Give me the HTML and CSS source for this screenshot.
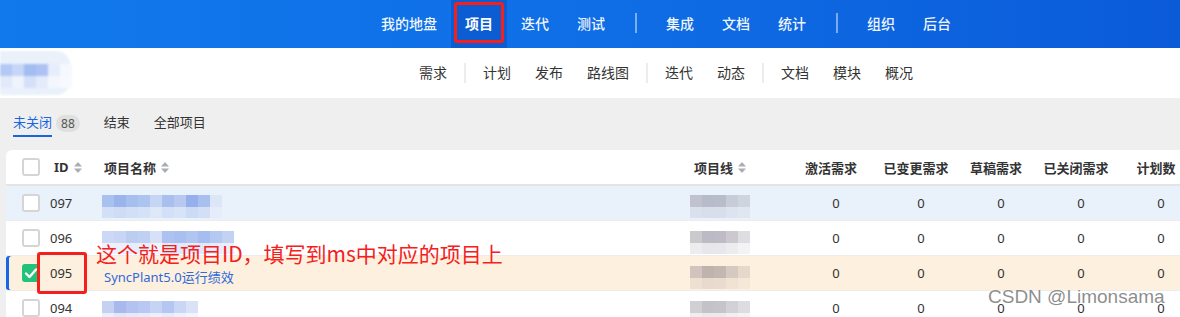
FILE: index.html
```html
<!DOCTYPE html>
<html lang="zh-CN">
<head>
<meta charset="utf-8">
<title>项目</title>
<link rel="stylesheet" href="styles.css">
</head>
<body>
<div class="page">
  <header class="topbar">
    <nav class="mainnav">
      <a class="nav-item">我的地盘</a>
      <a class="nav-item active">项目<span class="mark mark-nav"></span></a>
      <a class="nav-item">迭代</a>
      <a class="nav-item">测试</a>
      <span class="nav-sep"></span>
      <a class="nav-item">集成</a>
      <a class="nav-item">文档</a>
      <a class="nav-item">统计</a>
      <span class="nav-sep"></span>
      <a class="nav-item">组织</a>
      <a class="nav-item">后台</a>
    </nav>
  </header>

  <div class="subbar">
    <div class="logo-blur">
      <div class="logo-row logo-row-a"></div>
      <div class="logo-row logo-row-b"></div>
    </div>
    <nav class="subnav">
      <a class="sub-item">需求</a>
      <span class="sub-sep"></span>
      <a class="sub-item">计划</a>
      <a class="sub-item">发布</a>
      <a class="sub-item">路线图</a>
      <span class="sub-sep"></span>
      <a class="sub-item">迭代</a>
      <a class="sub-item">动态</a>
      <span class="sub-sep"></span>
      <a class="sub-item">文档</a>
      <a class="sub-item">模块</a>
      <a class="sub-item">概况</a>
    </nav>
  </div>

  <main class="content">
    <div class="tabs">
      <div class="tab active"><span class="tab-label">未关闭</span><span class="badge">88</span></div>
      <div class="tab"><span class="tab-label">结束</span></div>
      <div class="tab"><span class="tab-label">全部项目</span></div>
    </div>

    <div class="card">
      <div class="row head">
        <div class="c-check"><span class="checkbox"></span></div>
        <div class="c-id"><span class="th">ID<svg class="sort" viewBox="0 0 8 11" width="8" height="11"><polygon points="0,4.5 4,0 8,4.5"/><polygon points="0,6.5 8,6.5 4,11"/></svg></span></div>
        <div class="c-name"><span class="th">项目名称<svg class="sort" viewBox="0 0 8 11" width="8" height="11"><polygon points="0,4.5 4,0 8,4.5"/><polygon points="0,6.5 8,6.5 4,11"/></svg></span></div>
        <div class="c-line"><span class="th">项目线<svg class="sort" viewBox="0 0 8 11" width="8" height="11"><polygon points="0,4.5 4,0 8,4.5"/><polygon points="0,6.5 8,6.5 4,11"/></svg></span></div>
        <div class="c-num">激活需求</div>
        <div class="c-num">已变更需求</div>
        <div class="c-num">草稿需求</div>
        <div class="c-num">已关闭需求</div>
        <div class="c-num">计划数</div>
      </div>

      <div class="row hover">
        <div class="c-check"><span class="checkbox"></span></div>
        <div class="c-id">097</div>
        <div class="c-name"><span class="mosaic m-name-1"></span></div>
        <div class="c-line"><span class="mosaic m-line-1"></span></div>
        <div class="c-num">0</div>
        <div class="c-num">0</div>
        <div class="c-num">0</div>
        <div class="c-num">0</div>
        <div class="c-num">0</div>
      </div>

      <div class="row">
        <div class="c-check"><span class="checkbox"></span></div>
        <div class="c-id">096</div>
        <div class="c-name"><span class="mosaic m-name-2"></span></div>
        <div class="c-line"><span class="mosaic m-line-2"></span></div>
        <div class="c-num">0</div>
        <div class="c-num">0</div>
        <div class="c-num">0</div>
        <div class="c-num">0</div>
        <div class="c-num">0</div>
      </div>

      <div class="row selected">
        <div class="c-check"><span class="checkbox checked"><svg viewBox="0 0 18 18" width="18" height="18"><polyline points="4,9.5 7.5,13 14,5.5"/></svg></span></div>
        <div class="c-id">095<span class="mark mark-id"></span></div>
        <div class="c-name"><a class="proj-link">SyncPlant5.0运行绩效</a><span class="note">这个就是项目ID，填写到ms中对应的项目上</span></div>
        <div class="c-line"><span class="mosaic m-line-3"></span></div>
        <div class="c-num">0</div>
        <div class="c-num">0</div>
        <div class="c-num">0</div>
        <div class="c-num">0</div>
        <div class="c-num">0</div>
      </div>

      <div class="row">
        <div class="c-check"><span class="checkbox"></span></div>
        <div class="c-id">094</div>
        <div class="c-name"><span class="mosaic m-name-4"></span></div>
        <div class="c-line"><span class="mosaic m-line-4"></span></div>
        <div class="c-num">0</div>
        <div class="c-num">0</div>
        <div class="c-num">0</div>
        <div class="c-num">0</div>
        <div class="c-num">0</div>
      </div>
    </div>
  </main>

  <div class="watermark">CSDN @Limonsama</div>
</div>
</body>
</html>
```

FILE: styles.css
```css
html, body {
  margin: 0;
  padding: 0;
}
body {
  width: 1180px;
  height: 317px;
  overflow: hidden;
  background: #efefef;
  font-family: "Noto Sans", "Noto Sans CJK SC", sans-serif;
  color: #333;
}
.page {
  position: relative;
  width: 1180px;
  height: 317px;
  overflow: hidden;
}

/* ---------- top bar ---------- */
.topbar {
  height: 48px;
  background: linear-gradient(90deg, #1179ec 0%, #0f6ee6 50%, #0b5bd9 100%);
}
.mainnav {
  display: flex;
  height: 48px;
  padding-left: 367px;
}
.nav-item {
  position: relative;
  display: flex;
  align-items: center;
  box-sizing: border-box;
  height: 48px;
  padding: 0 14px 3px;
  font-family: "Noto Sans CJK SC", sans-serif;
  font-size: 14px;
  line-height: 1;
  font-weight: 500;
  color: rgba(255, 255, 255, 0.95);
}
.nav-item.active {
  background: #0c5dd2;
  color: #fff;
  font-weight: 700;
}
.nav-sep {
  width: 2px;
  height: 20px;
  margin: 13px 15px 0 16px;
  background: rgba(255, 255, 255, 0.45);
}

/* red annotation boxes */
.mark {
  position: absolute;
  box-sizing: border-box;
  border: 3px solid #f5201c;
  border-radius: 3px;
}
.mark-nav {
  left: 3px;
  right: 3px;
  top: 2px;
  height: 41px;
}
.mark-id {
  left: -13px;
  top: -4px;
  width: 50px;
  height: 42px;
}

/* ---------- sub bar ---------- */
.subbar {
  display: flex;
  align-items: center;
  height: 50px;
  background: #fff;
}
.logo-blur {
  width: 70px;
  height: 44px;
  padding-top: 13px;
  box-sizing: border-box;
  background: #eaf1fb;
  border-radius: 0 14px 14px 0;
  filter: blur(0.8px);
}
.logo-row {
  height: 12px;
  width: 72px;
}
.logo-row-a {
  background: linear-gradient(90deg, #b3c9f3 0 12px, #c6d6f6 12px 24px, #a2bdf1 24px 36px, #adc2f2 36px 48px, #e6eefb 48px 60px, #f5f8fe 60px 72px);
}
.logo-row-b {
  background: linear-gradient(90deg, #e2eaf9 0 12px, #eef3fc 12px 24px, #d5e0f8 24px 36px, #e4ebfa 36px 48px, #f3f7fd 48px 60px, #f7f9fe 60px 72px);
}
.subnav {
  display: flex;
  align-items: center;
  margin-left: 337px;
  height: 50px;
}
.sub-item {
  padding: 0 12px;
  font-family: "Noto Sans CJK SC", sans-serif;
  font-size: 14px;
  line-height: 1;
  color: #333;
  padding-bottom: 2px;
}
.sub-sep {
  width: 2px;
  height: 20px;
  margin: 0 5px;
  background: #ececec;
}

/* ---------- tabs ---------- */
.tabs {
  display: flex;
  align-items: flex-start;
  gap: 24px;
  padding: 12px 13px 0;
}
.tab {
  display: flex;
  align-items: flex-start;
}
.tab-label {
  display: block;
  font-family: "Noto Sans CJK SC", sans-serif;
  font-size: 13px;
  line-height: 24px;
  padding-bottom: 1px;
  border-bottom: 2px solid transparent;
  color: #333;
}
.tab.active .tab-label {
  color: #1766e0;
  border-bottom-color: #1766e0;
}
.badge {
  margin: 5px 0 0 4px;
  height: 17px;
  padding: 0 5px;
  border-radius: 9px;
  background: #e0e0e0;
  color: #555;
  font-size: 12px;
  line-height: 17px;
}

/* ---------- table card ---------- */
.card {
  margin: 13px 0 0 6px;
  width: 1195px;
  background: #fff;
  border-radius: 6px 0 0 0;
}
.row {
  position: relative;
  display: grid;
  grid-template-columns: 44px 50px 586px 105px 90px 80px 80px 80px 80px;
  align-items: center;
  box-sizing: border-box;
  height: 35px;
  border-bottom: 1px solid #ececec;
  font-size: 13px;
  color: #333;
}
.row.head {
  height: 36px;
  border-bottom: 2px solid #e4e4e4;
  font-weight: 700;
  border-radius: 6px 0 0 0;
}
.row.hover {
  background: #e9f1fb;
}
.row.selected {
  background: #fdf0de;
  box-shadow: inset 3px 0 0 #1565e6;
  border-radius: 3px 0 0 3px;
}
.c-check {
  display: flex;
  align-items: center;
  padding-left: 16px;
}
.c-id {
  position: relative;
  align-self: stretch;
  display: flex;
  align-items: center;
  padding-left: 0;
}
.head .c-id {
  padding-left: 4px;
}
.c-name {
  position: relative;
  padding-left: 4px;
  align-self: stretch;
  display: flex;
  align-items: center;
}
.c-line {
  padding-left: 4px;
  align-self: stretch;
  display: flex;
  align-items: center;
}
.head .c-line {
  padding-left: 8px;
}
.c-num {
  text-align: center;
}
.head .c-num {
  padding-right: 10px;
}
.th {
  display: inline-flex;
  align-items: center;
  gap: 5px;
  font-family: "Noto Sans CJK SC", sans-serif;
}
.c-id .th {
  font-family: "Noto Sans", "Noto Sans CJK SC", sans-serif;
}
.sort {
  fill: #a9adb5;
}
.head .c-num {
  font-family: "Noto Sans CJK SC", sans-serif;
}

.checkbox {
  display: block;
  box-sizing: border-box;
  width: 18px;
  height: 18px;
  border: 2px solid #d5d5d5;
  border-radius: 3px;
  background: #fff;
}
.checkbox.checked {
  position: relative;
  border: none;
  background: #22c27a;
}
.checkbox.checked svg {
  display: block;
  fill: none;
  stroke: #fff;
  stroke-width: 2.4;
  stroke-linecap: round;
  stroke-linejoin: round;
}

.proj-link {
  padding-top: 6px;
  font-size: 13px;
  color: #2f6ad8;
}
.note {
  position: absolute;
  left: -4px;
  top: -14px;
  white-space: nowrap;
  font-family: "Noto Sans CJK SC", sans-serif;
  font-size: 21px;
  line-height: 22px;
  color: #f5201c;
}

/* pixelated placeholders */
.mosaic {
  display: block;
  align-self: flex-start;
  margin-top: 9px;
  height: 12px;
  position: relative;
}
.mosaic::after {
  content: "";
  position: absolute;
  left: 0;
  right: 0;
  top: 12px;
  height: 11px;
  opacity: 0.35;
  background: inherit;
}
.m-name-1 {
  width: 120px;
  margin-left: -2px;
  background: linear-gradient(90deg, #a9c1ef 0 12px, #9bb4ec 12px 24px, #a6bfef 24px 36px, #aec4f0 36px 48px, #c6d5f3 48px 60px, #a9c0ef 60px 72px, #b7c9f1 72px 84px, #95b0ec 84px 96px, #a8bff0 96px 108px, #dde6f7 108px 120px);
}
.m-name-2 {
  width: 132px;
  margin-left: -2px;
  margin-top: 10px;
  background: linear-gradient(90deg, #ccd8f5 0 12px, #c8d5f4 12px 24px, #bccdf2 24px 36px, #bfd0f3 36px 48px, #d6e0f6 48px 60px, #adc2f0 60px 72px, #a8bff0 72px 84px, #b1c5f1 84px 96px, #a5bdef 96px 108px, #b5c8f1 108px 120px, #c1d2f3 120px 132px);
}
.m-name-4 {
  width: 96px;
  margin-left: -2px;
  margin-top: 10px;
  background: linear-gradient(90deg, #c6d0f2 0 12px, #a9b9ee 12px 24px, #b3c2f0 24px 36px, #b8c8f2 36px 48px, #c5d3f4 48px 60px, #b5c6f2 60px 72px, #c9d6f5 72px 84px, #d9e2f7 84px 96px);
}
.m-line-1 {
  width: 60px;
  background: linear-gradient(90deg, #c0c3cf 0 12px, #b7bbca 12px 24px, #b8bccb 24px 36px, #c8ccd8 36px 48px, #cfd4df 48px 60px);
}
.m-line-2 {
  width: 60px;
  margin-top: 10px;
  background: linear-gradient(90deg, #cacacd 0 12px, #bcbac4 12px 24px, #bebbc6 24px 36px, #cbc8d0 36px 48px, #dddde2 48px 60px);
}
.m-line-3 {
  width: 60px;
  margin-top: 10px;
  background: linear-gradient(90deg, #d0c4bc 0 12px, #c0b3ae 12px 24px, #c4b7b2 24px 36px, #d6c9c0 36px 48px, #e6d9cc 48px 60px);
}
.m-line-4 {
  width: 60px;
  margin-top: 10px;
  background: linear-gradient(90deg, #d0d0d3 0 12px, #c3c2c8 12px 24px, #c5c4ca 24px 36px, #d2d1d6 36px 48px, #dddde1 48px 60px);
}

/* ---------- watermark ---------- */
.watermark {
  position: absolute;
  left: 988px;
  top: 287px;
  font-family: "Liberation Sans", sans-serif;
  font-size: 19px;
  line-height: 20px;
  color: rgba(120, 120, 120, 0.85);
  text-shadow: 0 0 1px #fff, 0 0 1px #fff;
  white-space: nowrap;
}
```
